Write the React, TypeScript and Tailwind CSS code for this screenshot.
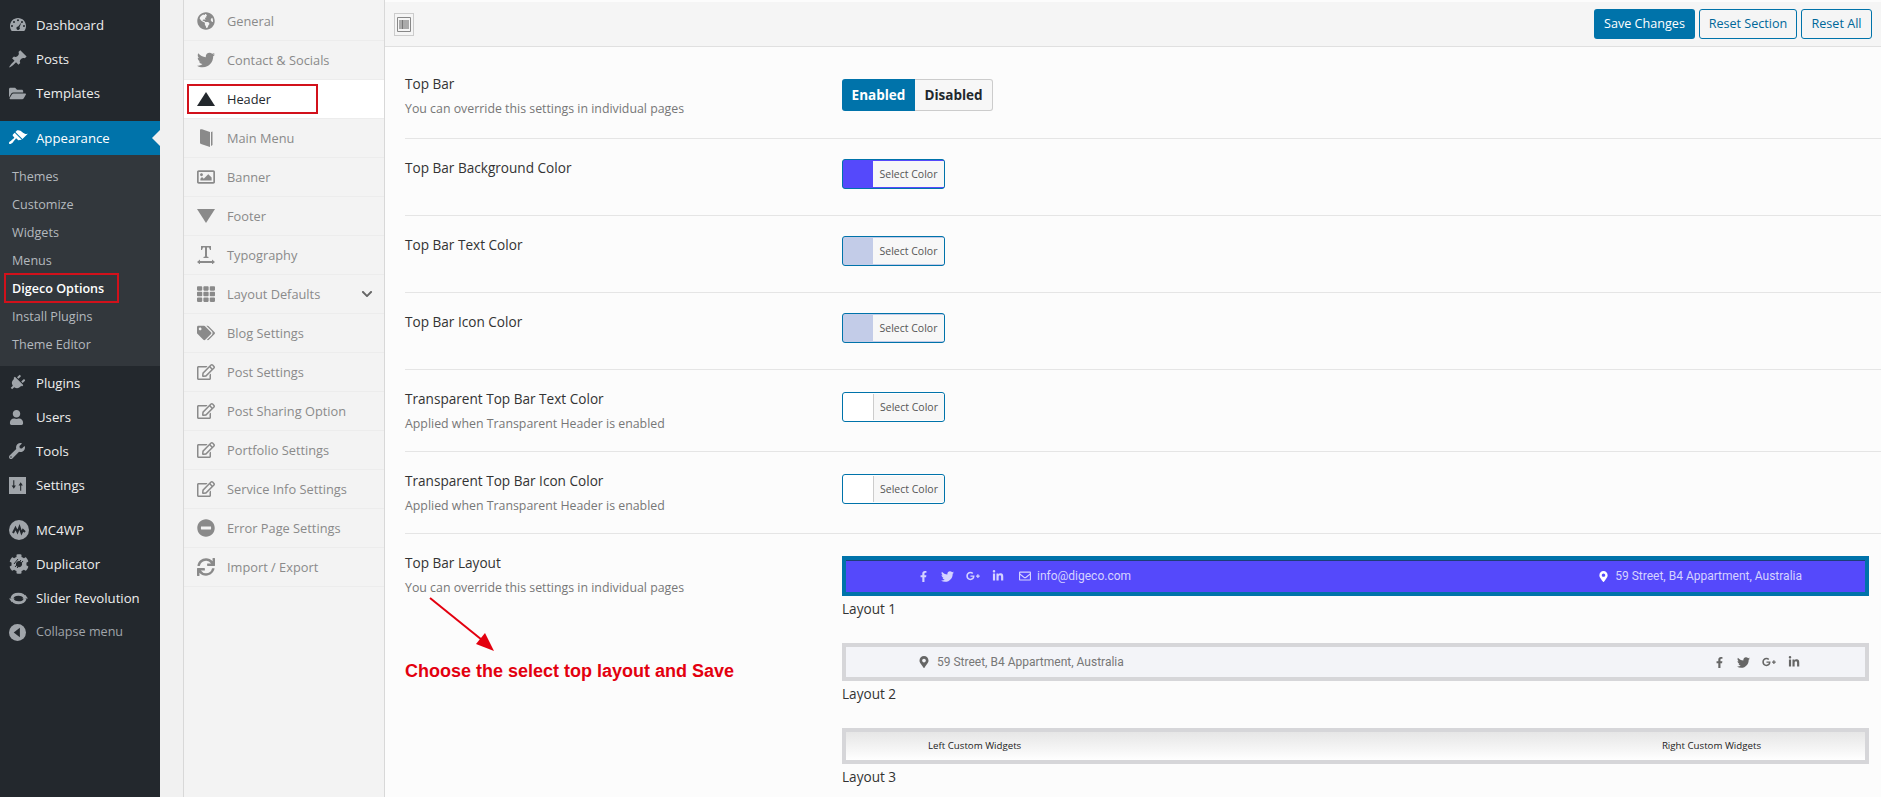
import type { ReactNode } from 'react'
import {
  FaFolderOpen, FaPlug, FaUser, FaWrench,
  FaTwitter, FaRegImage, FaTh, FaTags, FaRegEdit, FaMinusCircle, FaSync, FaGlobeAmericas,
  FaChevronDown, FaFacebookF, FaGooglePlusG, FaLinkedinIn, FaMapMarkerAlt, FaRegEnvelope, FaCog,
} from 'react-icons/fa'

const font = "font-['Open_Sans',sans-serif]"

function Dash({ d }: { d: string }) {
  return (
    <svg viewBox="0 0 20 20" className="w-[20px] h-[20px] -ml-[1px]" fill="currentColor">
      <path d={d} />
    </svg>
  )
}

const gauge = 'M3.760 16h12.480C17.340 14.630 18 12.890 18 11c0-4.420-3.580-8-8-8s-8 3.580-8 8c0 1.890.660 3.630 1.760 5zM10 4.200a1 1 0 110 2 1 1 0 010-2zM6 6a1 1 0 110 2 1 1 0 010-2zm8 0a1 1 0 110 2 1 1 0 010-2zM4 10a1 1 0 110 2 1 1 0 010-2zm12 0a1 1 0 110 2 1 1 0 010-2zm-2.500-2.800l-2 5.100a1.700 1.700 0 11-1.300-.700z'
const pin = 'M10.440 3.020l1.820-1.820 6.360 6.350-1.830 1.820c-1.050-.680-2.480-.570-3.410.360l-.750.750c-.920.930-1.040 2.350-.350 3.410l-1.830 1.820-2.410-2.410-2.800 2.790c-.420.420-3.380 2.710-3.800 2.290s1.860-3.390 2.280-3.810l2.790-2.790L4.100 9.360l1.830-1.820c1.050.690 2.480.570 3.400-.360l.750-.750c.930-.920 1.050-2.350.360-3.410z'
const brush = 'M14.480 11.060L7.410 3.990l1.500-1.500c.500-.560 2.300-.470 3.510.320 1.210.800 1.430 1.280 2.910 2.100 1.180.640 2.450 1.260 4.450.850zm-.710.710L6.700 4.700 4.930 6.470c-.390.390-.390 1.020 0 1.410l1.060 1.060c.390.390.390 1.030 0 1.420-.600.600-1.430 1.110-2.210 1.690-.350.260-.700.530-1.010.840C1.430 13.230.400 14.910 1.200 15.710c.800.790 2.480-.230 3.820-1.570.310-.310.580-.660.840-1.020.580-.780 1.090-1.610 1.690-2.210.390-.390 1.020-.390 1.410 0l1.060 1.060c.390.390 1.020.390 1.410 0z'

function SettingsIcon() {
  return (
    <svg viewBox="0 0 16 16" className="w-[17px] h-[17px]" fill="currentColor">
      <path fillRule="evenodd" d="M0 0h16v16H0zM4 3v5H2.500l2 3 2-3H5V3zM10.500 13V8H9l2-3 2 3h-1.500v5z" />
    </svg>
  )
}

function McIcon() {
  return (
    <svg viewBox="0 0 20 20" className="w-[20px] h-[20px]">
      <circle cx="10" cy="10" r="10" fill="#a0a5aa" />
      <path d="M4 13l2.500-5 2 4 2-5 2 6 1.500-3 2 2" fill="none" stroke="#23282d" strokeWidth="2" />
    </svg>
  )
}

function DuplicatorIcon() {
  return (
    <span className="relative flex">
      <FaCog size={20} />
      <svg viewBox="0 0 20 20" className="absolute inset-0 w-[20px] h-[20px]" stroke="#23282d" strokeWidth="1">
        <path d="M6 13l6-7M8 14l6-7M5 10l4-5" />
      </svg>
    </span>
  )
}

function RevolutionIcon() {
  return (
    <svg viewBox="0 0 20 20" className="w-[19px] h-[19px]" fill="none" stroke="currentColor" strokeWidth="3">
      <path d="M3 10c1.500-6 12-6 14 0M17 10c-1.500 6-12 6-14 0" />
      <path d="M0 10h6l-3 4zM20 10h-6l3-4z" fill="currentColor" stroke="none" />
    </svg>
  )
}

function CollapseIcon() {
  return (
    <svg viewBox="0 0 18 18" className="w-[17px] h-[17px]">
      <circle cx="9" cy="9" r="9" fill="#a0a5aa" />
      <path d="M11.500 4v10L5 9z" fill="#23282d" />
    </svg>
  )
}

function TypographyIcon() {
  return (
    <svg viewBox="0 0 18 18" className="w-[18px] h-[18px]" fill="currentColor">
      <path d="M4 0h10v4h-1l-1-2.500h-2V10.500l1.500.5v1h-5v-1l1.500-.5V1.500H6L5 4H4z" />
      <path d="M0 16l3-2.500V15h12v-1.500l3 2.500-3 2.500V17H3v1.500z" />
    </svg>
  )
}

function BookIcon() {
  return (
    <svg viewBox="0 0 18 18" className="w-[18px] h-[18px]" fill="currentColor">
      <path d="M3 1c0-1 1-1 2-.7L13 3v15L4 15c-.700-.300-1-.700-1-1.500z" />
      <path d="M14 3l1.500-.5V16L14 17z" />
    </svg>
  )
}

function MenuRow({ icon, label }: { icon: ReactNode; label: string }) {
  return (
    <div className="h-[34px] flex items-center text-[#eeeeee] text-[13.200px]">
      <span className="w-[36px] pl-[9px] flex text-[#a0a5aa]">{icon}</span>
      <span className="pt-[1px]">{label}</span>
    </div>
  )
}

const subItems = ['Themes', 'Customize', 'Widgets', 'Menus', 'Digeco Options', 'Install Plugins', 'Theme Editor']

function Sidebar() {
  return (
    <aside className="w-[160px] shrink-0 bg-[#23282d] pt-[8px]">
      <MenuRow icon={<Dash d={gauge} />} label="Dashboard" />
      <MenuRow icon={<Dash d={pin} />} label="Posts" />
      <MenuRow icon={<FaFolderOpen size={17} />} label="Templates" />
      <div className="relative mt-[11px] h-[34px] bg-[#0073aa] flex items-center text-white text-[13.200px]">
        <span className="w-[36px] pl-[9px] flex"><Dash d={brush} /></span>
        <span className="pt-[1px]">Appearance</span>
        <span className="absolute right-0 top-[9px] border-y-[8px] border-r-[8px] border-y-transparent border-r-[#f1f1f1]" />
      </div>
      <div className="bg-[#32373c] pt-[8px] pb-[7px]">
        {subItems.map((item) => (
          <div key={item} className={`h-[28px] pl-[12px] flex items-center text-[12.600px] ${item === 'Digeco Options' ? 'text-white font-semibold' : 'text-[#b4b9be]'}`}>
            {item}
          </div>
        ))}
      </div>
      <MenuRow icon={<FaPlug size={16} className="rotate-45" />} label="Plugins" />
      <MenuRow icon={<FaUser size={15} />} label="Users" />
      <MenuRow icon={<FaWrench size={16} />} label="Tools" />
      <MenuRow icon={<SettingsIcon />} label="Settings" />
      <div className="h-[11px]" />
      <MenuRow icon={<McIcon />} label="MC4WP" />
      <MenuRow icon={<DuplicatorIcon />} label="Duplicator" />
      <MenuRow icon={<RevolutionIcon />} label="Slider Revolution" />
      <div className="h-[34px] flex items-center text-[#a0a5aa] text-[12.600px]">
        <span className="w-[36px] pl-[9px] flex"><CollapseIcon /></span>
        <span className="pt-[1px]">Collapse menu</span>
      </div>
    </aside>
  )
}

const navItems: { label: string; icon: ReactNode; active?: boolean; caret?: boolean }[] = [
  { label: 'General', icon: <FaGlobeAmericas size={18} /> },
  { label: 'Contact & Socials', icon: <FaTwitter size={18} /> },
  { label: 'Header', active: true, icon: <span className="border-x-[9px] border-b-[14px] border-x-transparent border-b-[#23282d]" /> },
  { label: 'Main Menu', icon: <BookIcon /> },
  { label: 'Banner', icon: <FaRegImage size={18} /> },
  { label: 'Footer', icon: <span className="border-x-[9px] border-t-[14px] border-x-transparent border-t-[#8a8a8a]" /> },
  { label: 'Typography', icon: <TypographyIcon /> },
  { label: 'Layout Defaults', icon: <FaTh size={18} />, caret: true },
  { label: 'Blog Settings', icon: <FaTags size={18} /> },
  { label: 'Post Settings', icon: <FaRegEdit size={18} /> },
  { label: 'Post Sharing Option', icon: <FaRegEdit size={18} /> },
  { label: 'Portfolio Settings', icon: <FaRegEdit size={18} /> },
  { label: 'Service Info Settings', icon: <FaRegEdit size={18} /> },
  { label: 'Error Page Settings', icon: <FaMinusCircle size={18} /> },
  { label: 'Import / Export', icon: <FaSync size={18} /> },
]

function OptionsNav() {
  return (
    <nav className="w-[202px] ml-[23px] shrink-0 bg-[#f3f3f3] border-x border-[#d8d8d8] pt-[2px]">
      {navItems.map((item) => (
        <div
          key={item.label}
          className={`h-[39px] flex items-center border-b border-[#ececec] text-[12.800px] ${item.active ? 'bg-white text-[#23282d]' : 'text-[#8a8a8a]'}`}
        >
          <span className="w-[43px] pl-[13px] h-[18px] flex items-center">{item.icon}</span>
          <span className="flex-1 pt-[1px]">{item.label}</span>
          {item.caret && <FaChevronDown size={12} className="mr-[11px] text-[#666666]" />}
        </div>
      ))}
    </nav>
  )
}

function ColorButton({ swatch, inner }: { swatch: string; inner: string }) {
  return (
    <div className={`w-[103px] h-[30px] rounded-[3px] border border-[#0073aa] flex items-center overflow-hidden ${swatch}`}>
      <span className={`ml-auto w-[71px] h-[26px] pt-[1px] flex items-center justify-center text-[10.500px] text-[#555555] ${inner}`}>Select Color</span>
    </div>
  )
}

const dividerRow = 'flex border-b border-[#e5e5e5]'
const muted = 'text-[12.350px] leading-[20px] mt-[5px] text-[#777777]'
const title = 'text-[13.600px] leading-[20px] text-[#333333]'

function ColorRow({ label, hint, box, text, ctrl, swatch, inner }: { label: string; hint?: string; box: string; text: string; ctrl: string; swatch: string; inner: string }) {
  return (
    <div className={`${dividerRow} ${box}`}>
      <div className={`w-[437px] shrink-0 ${text}`}>
        <div className={title}>{label}</div>
        {hint && <div className={muted}>{hint}</div>}
      </div>
      <div className={ctrl}>
        <ColorButton swatch={swatch} inner={inner} />
      </div>
    </div>
  )
}

function Socials({ dark }: { dark?: boolean }) {
  return (
    <span className={`flex items-center gap-[12px] ${dark ? 'text-[#666666]' : 'text-[#d5d3ff]'}`}>
      <FaFacebookF size={11} />
      <FaTwitter size={13} />
      <FaGooglePlusG size={14} />
      <FaLinkedinIn size={12} />
    </span>
  )
}

function Layouts() {
  return (
    <div className="w-[1027px]">
      <div className="h-[40px] border-[4px] border-[#0073aa] shadow-[inset_0_1px_0_#1d3d7a] bg-[#5549fb] flex items-center justify-between pl-[72px] pr-[63px] text-[12px] text-[#d5d3ff] font-['Roboto',sans-serif]">
        <span className="flex items-center">
          <Socials />
          <FaRegEnvelope size={12} className="ml-[15px] mr-[6px]" />
          info@digeco.com
        </span>
        <span className="flex items-center gap-[6px]"><FaMapMarkerAlt size={11} className="text-white" />59 Street, B4 Appartment, Australia</span>
      </div>
      <div className="h-[27px] flex items-center text-[13.600px] text-[#333333]">Layout 1</div>
      <div className="mt-[20px] h-[38px] border-[4px] border-[#d6d6d9] bg-[#f3f4f8] flex items-center justify-between pl-[72px] pr-[65px] text-[12px] text-[#777777] font-['Roboto',sans-serif]">
        <span className="flex items-center gap-[7px]"><FaMapMarkerAlt size={12} className="text-[#666666]" />59 Street, B4 Appartment, Australia</span>
        <Socials dark />
      </div>
      <div className="h-[27px] flex items-center text-[13.600px] text-[#333333]">Layout 2</div>
      <div className="mt-[20px] h-[36px] border-[4px] border-[#d6d6d9] bg-gradient-to-b from-[#e6e6e6] to-white flex items-center justify-between pl-[82px] pr-[104px] text-[9.700px] text-[#222222]">
        <span>Left Custom Widgets</span>
        <span>Right Custom Widgets</span>
      </div>
      <div className="h-[27px] flex items-center text-[13.600px] text-[#333333]">Layout 3</div>
    </div>
  )
}

function Content() {
  return (
    <main className="flex-1 min-w-0 bg-[#fcfcfc] pt-[2px]">
      <div className="h-[45px] bg-[#f5f5f5] border-b border-[#e0e0e0] flex items-center justify-between pl-[9px] pr-[9px]">
        <span className="w-[20px] h-[23px] border border-[#cccccc] flex items-center justify-center">
          <svg viewBox="0 0 14 15" className="w-[14px] h-[15px]">
            <path d="M.5.5h13v14H.5z" fill="none" stroke="#888888" />
            <path d="M2 3h10v9H2z" fill="#aaaaaa" />
            <path d="M5 3h1v9H5z" fill="#777777" />
          </svg>
        </span>
        <div className="flex gap-[4px] text-[12.600px]">
          <span className="w-[101px] h-[30px] rounded-[3px] bg-[#0073aa] text-white flex items-center justify-center">Save Changes</span>
          <span className="w-[98px] h-[30px] rounded-[3px] border border-[#0073aa] text-[#006799] flex items-center justify-center">Reset Section</span>
          <span className="w-[71px] h-[30px] rounded-[3px] border border-[#0073aa] text-[#006799] flex items-center justify-center">Reset All</span>
        </div>
      </div>
      <div className="pl-[20px]">
        <div className={`${dividerRow} h-[92px] pt-[27px]`}>
          <div className="w-[437px] shrink-0">
            <div className={title}>Top Bar</div>
            <div className={muted}>You can override this settings in individual pages</div>
          </div>
          <div className="flex h-[32px] mt-[5px] text-[13.500px] font-bold">
            <span className="w-[73px] rounded-l-[3px] bg-[#0073aa] text-white flex items-center justify-center">Enabled</span>
            <span className="w-[78px] rounded-r-[3px] border border-[#cccccc] border-l-0 bg-[#f7f7f7] text-[#23282d] flex items-center justify-center">Disabled</span>
          </div>
        </div>
        <ColorRow label="Top Bar Background Color" box="h-[77px]" text="pt-[19px]" ctrl="pt-[20px]" swatch="bg-[#5549fb]" inner="bg-[#f7f7f7]" />
        <ColorRow label="Top Bar Text Color" box="h-[77px]" text="pt-[19px]" ctrl="pt-[20px]" swatch="bg-[#c3cce8]" inner="bg-[#f7f7f7]" />
        <ColorRow label="Top Bar Icon Color" box="h-[77px]" text="pt-[19px]" ctrl="pt-[20px]" swatch="bg-[#c3cce8]" inner="bg-[#f7f7f7]" />
        <ColorRow label="Transparent Top Bar Text Color" hint="Applied when Transparent Header is enabled" box="h-[82px]" text="pt-[19px]" ctrl="pt-[22px]" swatch="bg-white" inner="bg-[#f7f7f7] border-l border-[#cccccc]" />
        <ColorRow label="Transparent Top Bar Icon Color" hint="Applied when Transparent Header is enabled" box="h-[82px]" text="pt-[19px]" ctrl="pt-[22px]" swatch="bg-white" inner="bg-[#f7f7f7] border-l border-[#cccccc]" />
        <div className="flex pt-[22px]">
          <div className="w-[437px] shrink-0 -mt-[3px]">
            <div className={title}>Top Bar Layout</div>
            <div className={muted}>You can override this settings in individual pages</div>
            <div className="mt-[61px] text-[18px] leading-[24px] font-bold text-[#e3000f] font-['Liberation_Sans',sans-serif]">Choose the select top layout and Save</div>
          </div>
          <Layouts />
        </div>
      </div>
    </main>
  )
}

export default function App() {
  return (
    <div className={`relative flex h-[797px] overflow-hidden bg-[#f1f1f1] ${font}`}>
      <Sidebar />
      <OptionsNav />
      <Content />
      {/* red annotations drawn over the screenshot */}
      <div className="absolute left-[4px] top-[273px] w-[115px] h-[30px] border-2 border-[#d2111b]" />
      <div className="absolute left-[187px] top-[84px] w-[131px] h-[30px] border-2 border-[#d2111b]" />
      <svg className="absolute left-[425px] top-[595px] w-[75px] h-[60px]" viewBox="0 0 75 60">
        <path d="M5 3L62 49" stroke="#e3000f" strokeWidth="2" />
        <path d="M69 56L51 49L60 38z" fill="#e3000f" />
      </svg>
    </div>
  )
}
